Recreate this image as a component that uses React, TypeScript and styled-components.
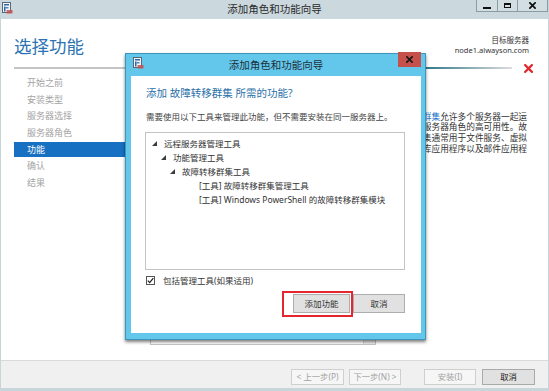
import React from 'react';
import styled, { createGlobalStyle } from 'styled-components';

const GlobalStyle = createGlobalStyle`
    html, body {
        margin: 0;
        padding: 0;
        background: #ffffff;
    }
    body {
        font-family: "Noto Sans", "Noto Sans CJK SC", sans-serif;
        color: #333333;
    }
`;

const navItems = ['开始之前', '安装类型', '服务器选择', '服务器角色', '功能', '确认', '结果'];

const treeItems = [
    { text: '远程服务器管理工具', indent: 6, open: true },
    { text: '功能管理工具', indent: 15, open: true },
    { text: '故障转移群集工具', indent: 24, open: true },
    { text: '[工具] 故障转移群集管理工具', indent: 41, open: false },
    { text: '[工具] Windows PowerShell 的故障转移群集模块', indent: 41, open: false },
];

const AppIcon = () => (
    <svg width="11" height="12" viewBox="0 0 11 12">
        <rect x="0.5" y="0.5" width="8" height="10" fill="#f4f6f8" stroke="#56697a" />
        <rect x="2" y="2" width="5" height="1.5" fill="#2c68a8" />
        <rect x="2" y="4.5" width="1.5" height="5" fill="#2c68a8" />
        <rect x="3.5" y="5.2" width="3" height="1.2" fill="#2c68a8" />
        <rect x="4.5" y="8" width="6" height="3.5" fill="#c0504d" opacity="0.85" />
    </svg>
);

const CloseGlyph = ({ size = 7, color = '#111' }: { size?: number; color?: string }) => (
    <svg width={size} height={size} viewBox="0 0 8 8">
        <path d="M1 1 L7 7 M7 1 L1 7" stroke={color} strokeWidth="2" strokeLinecap="square" />
    </svg>
);

const Expander = () => (
    <svg width="5" height="5" viewBox="0 0 5 5">
        <polygon points="5,0 5,5 0,5" fill="#3c3c3c" />
    </svg>
);

const App: React.FC = () => {
    return (
        <>
            <GlobalStyle />
            <Window>
                <TitleBar>
                    <TitleIcon><AppIcon /></TitleIcon>
                    <TitleText>添加角色和功能向导</TitleText>
                    <WinButtons>
                        <WinButton $w={20}><MinGlyph /></WinButton>
                        <WinButton $w={19}><MaxGlyph /></WinButton>
                        <WinButton $w={29}><CloseGlyph size={7} /></WinButton>
                    </WinButtons>
                </TitleBar>

                <Main>
                    <Header>
                        <PageTitle>选择功能</PageTitle>
                        <Target>
                            <div>目标服务器</div>
                            <div>node1.alwayson.com</div>
                        </Target>
                    </Header>
                    <DividerRow>
                        <Divider />
                        <ErrorMark><CloseGlyph size={9} color="#e02a2f" /></ErrorMark>
                    </DividerRow>
                    <Body>
                        <Nav>
                            {navItems.map((item) => (
                                <NavItem key={item} $selected={item === '功能'}>{item}</NavItem>
                            ))}
                        </Nav>
                        <Features>
                            <FeatureBox>
                                <ScrollTrack />
                            </FeatureBox>
                        </Features>
                        <Description>
                            <Link>故障转移群集</Link>允许多个服务器一起运行以提供服务器角色的高可用性。故障转移群集通常用于文件服务、虚拟机、数据库应用程序以及邮件应用程序。
                        </Description>
                    </Body>
                </Main>

                <Footer>
                    <FooterButton $w={53} $disabled>&lt; 上一步(P)</FooterButton>
                    <FooterButton $w={52} $gap={5} $disabled>下一步(N) &gt;</FooterButton>
                    <FooterButton $w={52} $gap={23} $disabled>安装(I)</FooterButton>
                    <FooterButton $w={53} $gap={6}>取消</FooterButton>
                </Footer>

                <Dialog>
                    <DialogTitleBar>
                        <DialogIcon><AppIcon /></DialogIcon>
                        <DialogTitle>添加角色和功能向导</DialogTitle>
                        <DialogClose><CloseGlyph size={7} color="#1a1a1a" /></DialogClose>
                    </DialogTitleBar>
                    <DialogBody>
                        <DialogHeading>添加 故障转移群集 所需的功能?</DialogHeading>
                        <DialogText>需要使用以下工具来管理此功能，但不需要安装在同一服务器上。</DialogText>
                        <TreeBox>
                            {treeItems.map((item) => (
                                <TreeRow key={item.text} $indent={item.indent}>
                                    <ExpanderSlot>{item.open && <Expander />}</ExpanderSlot>
                                    <span>{item.text}</span>
                                </TreeRow>
                            ))}
                        </TreeBox>
                        <CheckRow>
                            <CheckBox>
                                <svg width="7" height="7" viewBox="0 0 7 7">
                                    <path d="M0.8 3.6 L2.7 5.6 L6.3 1.2" stroke="#222" strokeWidth="1.3" fill="none" />
                                </svg>
                            </CheckBox>
                            <span>包括管理工具(如果适用)</span>
                        </CheckRow>
                        <ButtonRow>
                            <Highlighted>
                                <DialogButton $w={57}>添加功能</DialogButton>
                                <RedMark />
                            </Highlighted>
                            <DialogButton $w={52}>取消</DialogButton>
                        </ButtonRow>
                    </DialogBody>
                </Dialog>
            </Window>
        </>
    );
};

export default App;

const Window = styled.div`
    position: relative;
    width: 549px;
    height: 391px;
    box-sizing: border-box;
    display: flex;
    flex-direction: column;
    background: #ffffff;
    border: solid #c8d5db;
    border-width: 0 1px 3px 1px;
    overflow: hidden;
`;

const TitleBar = styled.div`
    flex: none;
    height: 19px;
    display: grid;
    grid-template-columns: 1fr auto 1fr;
    align-items: start;
    background: #cbd8de;
`;

const TitleIcon = styled.div`
    display: flex;
    align-items: flex-start;
    padding: 2px 0 0 1px;
`;

const TitleText = styled.div`
    font-size: 10.5px;
    line-height: 19px;
    color: #2a2a2a;
`;

const WinButtons = styled.div`
    justify-self: end;
    display: flex;
    height: 12px;
    border: 1px solid #8c9ca4;
    border-top: 0;
    box-sizing: border-box;
`;

const WinButton = styled.div<{ $w: number }>`
    width: ${(p) => p.$w}px;
    display: flex;
    align-items: center;
    justify-content: center;
    background: #d3dee3;
    & + & {
        border-left: 1px solid #8c9ca4;
    }
`;

const MinGlyph = styled.div`
    width: 8px;
    height: 2px;
    margin-top: 4px;
    background: #111;
`;

const MaxGlyph = styled.div`
    width: 7px;
    height: 5px;
    box-sizing: border-box;
    border: 1px solid #111;
    border-top-width: 2px;
`;

const Main = styled.main`
    flex: 1;
    min-height: 0;
    display: flex;
    flex-direction: column;
    padding: 0 19px 0 13px;
`;

const Header = styled.div`
    display: flex;
    justify-content: space-between;
    align-items: flex-start;
    padding-top: 15px;
    height: 24px;
`;

const PageTitle = styled.h1`
    margin: 0;
    font-size: 17.5px;
    line-height: 24px;
    font-weight: 400;
    color: #2b73b3;
`;

const Target = styled.div`
    margin-top: 1px;
    font-size: 7.5px;
    line-height: 10px;
    text-align: right;
    color: #333;
`;

const DividerRow = styled.div`
    margin-top: 5px;
    height: 10px;
    display: flex;
    align-items: center;
    gap: 12px;
`;

const Divider = styled.div`
    flex: 1;
    height: 2px;
    background: linear-gradient(to right, #c4c4c4 0%, #c4c4c4 45%, #2b7487 82%, #dcdcdc 100%);
`;

const ErrorMark = styled.div`
    display: flex;
    margin-right: -4px;
`;

const Body = styled.div`
    margin-top: 2px;
    flex: 1;
    min-height: 0;
    display: flex;
`;

const Nav = styled.nav`
    flex: none;
    width: 120px;
    display: flex;
    flex-direction: column;
    gap: 1.67px;
`;

const NavItem = styled.div<{ $selected?: boolean }>`
    height: 15px;
    line-height: 15px;
    padding-left: 13px;
    font-size: 9px;
    color: ${(p) => (p.$selected ? '#ffffff' : '#a4a4a4')};
    background: ${(p) => (p.$selected ? '#1770c2' : 'transparent')};
`;

const Features = styled.div`
    flex: none;
    width: 226px;
    margin-left: 16px;
    display: flex;
    flex-direction: column;
    padding: 20px 0 15px;
`;

const FeatureBox = styled.div`
    flex: 1;
    border: 1px solid #c6c6c6;
    display: flex;
    justify-content: flex-end;
`;

const ScrollTrack = styled.div`
    width: 11px;
    background: #ececec;
    border-left: 1px solid #d8d8d8;
`;

const Description = styled.div`
    flex: none;
    width: 141px;
    margin-left: 12px;
    padding-top: 36.6px;
    font-size: 8.7px;
    line-height: 10.7px;
    color: #333;
`;

const Link = styled.span`
    color: #1b74c6;
`;

const Footer = styled.footer`
    flex: none;
    height: 28px;
    box-sizing: border-box;
    border-top: 1px solid #dadada;
    background: #f0f0f0;
    display: flex;
    justify-content: flex-end;
    align-items: flex-start;
    padding: 8px 13px 0 0;
`;

const FooterButton = styled.div<{ $w: number; $gap?: number; $disabled?: boolean }>`
    width: ${(p) => p.$w}px;
    height: 16px;
    margin-left: ${(p) => p.$gap ?? 0}px;
    box-sizing: border-box;
    border: 1px solid ${(p) => (p.$disabled ? '#cfcfcf' : '#a9a9a9')};
    background: ${(p) => (p.$disabled ? '#f6f6f6' : '#e1e1e1')};
    color: ${(p) => (p.$disabled ? '#a2a2a2' : '#222')};
    font-size: 8.3px;
    line-height: 14px;
    text-align: center;
    white-space: nowrap;
`;

const Dialog = styled.div`
    position: absolute;
    left: 124px;
    top: 53px;
    width: 301px;
    height: 287px;
    box-sizing: border-box;
    border: 1px solid #3d95ba;
    background: #63c7ec;
    padding: 0 4px 6px 5px;
    display: flex;
    flex-direction: column;
    box-shadow: 0 2px 3px rgba(0, 0, 0, 0.5);
`;

const DialogTitleBar = styled.div`
    flex: none;
    height: 22px;
    display: grid;
    grid-template-columns: 1fr auto 1fr;
    align-items: start;
`;

const DialogIcon = styled.div`
    display: flex;
    align-items: flex-start;
    padding: 3px 0 0 2px;
`;

const DialogTitle = styled.div`
    font-size: 10.5px;
    line-height: 22px;
    color: #1f2f38;
`;

const DialogClose = styled.div`
    justify-self: end;
    margin-top: -2px;
    width: 23px;
    height: 15px;
    background: #c6514b;
    display: flex;
    align-items: center;
    justify-content: center;
`;

const DialogBody = styled.div`
    flex: 1;
    background: #ffffff;
    padding: 10px 16px 0 14px;
    display: flex;
    flex-direction: column;
`;

const DialogHeading = styled.h2`
    margin: 0 0 0 1px;
    font-size: 10.5px;
    line-height: 14px;
    font-weight: 400;
    color: #2a70a8;
`;

const DialogText = styled.p`
    margin: 11px 0 0 1px;
    font-size: 8.5px;
    line-height: 12px;
    color: #444;
    white-space: nowrap;
`;

const TreeBox = styled.div`
    margin-top: 9px;
    height: 138px;
    box-sizing: border-box;
    border: 1px solid #c4c4c4;
    padding-top: 3px;
`;

const TreeRow = styled.div<{ $indent: number }>`
    height: 14px;
    display: flex;
    align-items: center;
    gap: 7px;
    padding-left: ${(p) => p.$indent}px;
    font-size: 8.5px;
    color: #333;
    white-space: nowrap;
`;

const ExpanderSlot = styled.span`
    width: 5px;
    height: 5px;
    display: flex;
`;

const CheckRow = styled.div`
    margin-top: 4px;
    height: 12px;
    display: flex;
    align-items: center;
    gap: 8px;
    padding-left: 1px;
    font-size: 8.5px;
    color: #333;
`;

const CheckBox = styled.span`
    width: 9px;
    height: 9px;
    box-sizing: border-box;
    border: 1px solid #555;
    background: #fff;
    display: flex;
    align-items: center;
    justify-content: center;
`;

const ButtonRow = styled.div`
    margin-top: 8px;
    display: flex;
    justify-content: flex-end;
    gap: 3px;
`;

const Highlighted = styled.div`
    position: relative;
    display: flex;
`;

const RedMark = styled.div`
    position: absolute;
    left: -11px;
    top: -3px;
    right: -3px;
    bottom: -4px;
    border: 2px solid #e3262f;
`;

const DialogButton = styled.div<{ $w: number }>`
    width: ${(p) => p.$w}px;
    height: 19px;
    box-sizing: border-box;
    border: 1px solid #adadad;
    background: #e1e1e1;
    font-size: 8.5px;
    line-height: 17px;
    text-align: center;
    color: #333;
`;
